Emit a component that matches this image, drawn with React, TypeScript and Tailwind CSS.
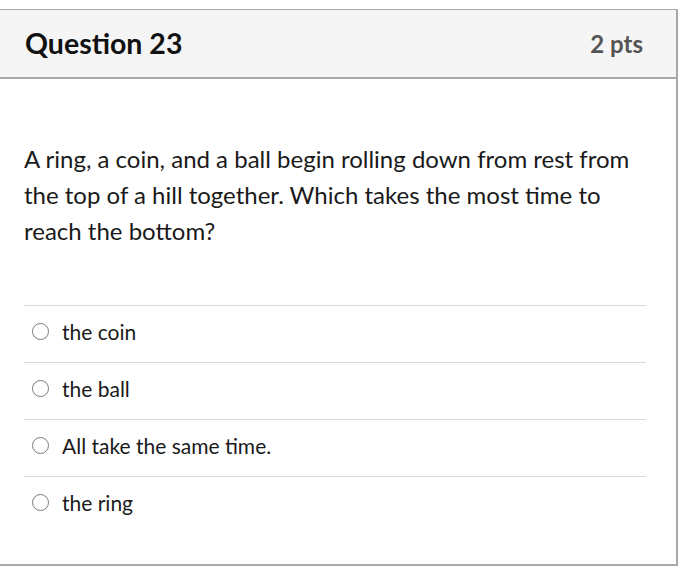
import React from 'react';

const answers = ['the coin', 'the ball', 'All take the same time.', 'the ring'];

const Radio: React.FC = () => (
  <span className="w-[17px] h-[17px] rounded-full border border-[#7a7a7a] bg-white shrink-0" />
);

export default function App() {
  return (
    <div className="w-[684px] h-[588px] bg-white pt-[9px] font-['Lato',sans-serif] text-[#2d3b45]">
      <div className="w-[678px] border-t border-r-2 border-b-2 border-[#a8a8a8]">
        {/* Header */}
        <div className="h-[69px] bg-[#f5f5f5] border-b-2 border-[#a8a8a8] flex items-center justify-between pl-[25px] pr-[33px]">
          <h2 className="text-[28.5px] font-bold text-[#111]">Question 23</h2>
          <span className="text-[24px] font-bold text-[#555]">2 pts</span>
        </div>

        {/* Body */}
        <div className="px-[24px] pt-[62px]">
          <p className="text-[24px] leading-[36px] text-[#1a1a1a]">
            A ring, a coin, and a ball begin rolling down from rest from the top of a hill together. Which takes the most time to reach the bottom?
          </p>

          <div className="mt-[56px] mr-[6px] pb-[31px]">
            {answers.map(a => (
              <div key={a} className="border-t border-[#dadada] h-[57px] flex items-center gap-[13px] pl-[8px] pb-[5px]">
                <Radio />
                <span className="text-[21px] text-[#1a1a1a]">{a}</span>
              </div>
            ))}
          </div>
        </div>
      </div>
    </div>
  );
}
